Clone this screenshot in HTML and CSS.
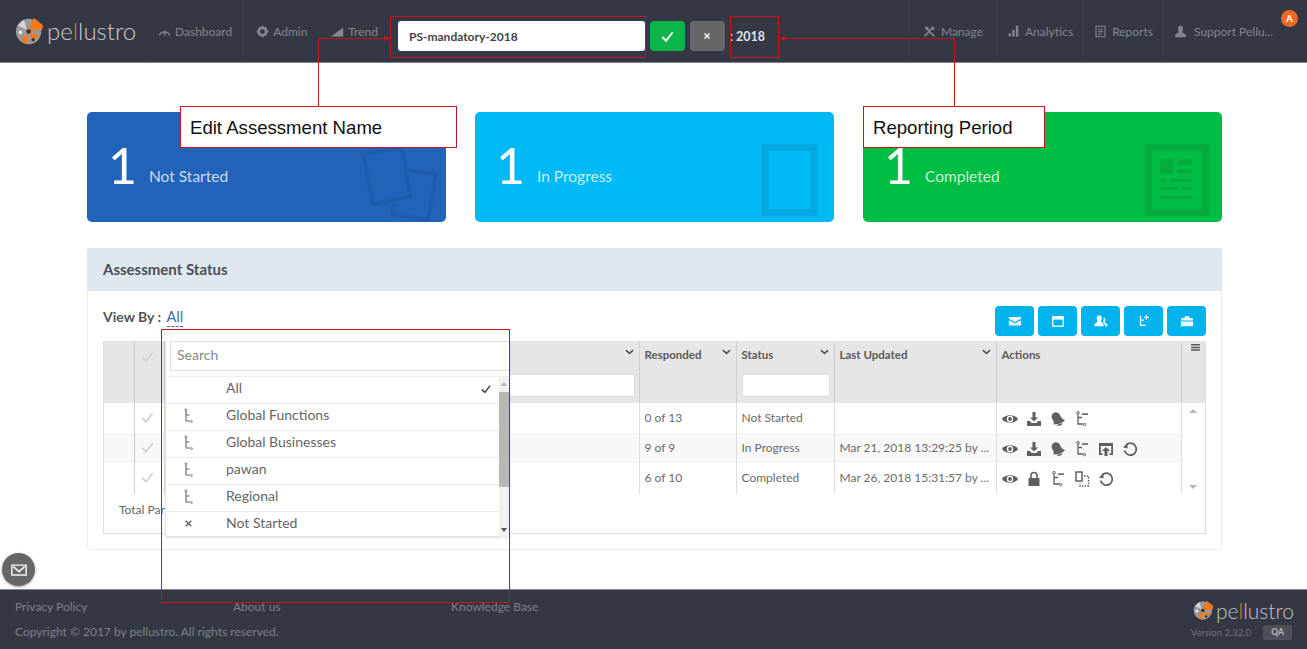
FILE: index.html
```html
<!DOCTYPE html>
<html lang="en">
<head>
<meta charset="utf-8">
<title>Pellustro</title>
<link rel="stylesheet" href="styles.css">
</head>
<body>
<svg class="sprite" width="0" height="0" aria-hidden="true">
  <defs>
    <symbol id="i-logo" viewBox="0 0 32 32">
      <circle cx="15" cy="16" r="14" fill="#9a9a9a"/>
      <path d="M14 15 L21 1 L31 9 L30 14Z" fill="#f47a20"/>
      <path d="M15 18 L26 19 L21 28Z" fill="#f47a20"/>
      <path d="M14 18 L6 26 L14 30Z" fill="#f47a20"/>
      <path d="M13 14 L3 9 L10 3Z" fill="#d5d5d5"/>
      <circle cx="15" cy="16" r="2.600" fill="#333"/>
      <circle cx="20" cy="25" r="1.800" fill="#333"/>
      <circle cx="6" cy="17" r="2" fill="#eee"/>
    </symbol>
    <symbol id="i-gauge" viewBox="0 0 16 16">
      <path d="M1.500 13 A7 7 0 0 1 14.500 13" fill="none" stroke="currentColor" stroke-width="1.600"/>
      <path d="M6.500 13 L10 5.500 L9 13Z" fill="currentColor"/>
    </symbol>
    <symbol id="i-gear" viewBox="0 0 16 16">
      <circle cx="8" cy="8" r="4.400" fill="none" stroke="currentColor" stroke-width="3"/>
      <path d="M6.500 .8h3v3h-3zM6.500 12.200h3v3h-3zM.8 6.500h3v3h-3zM12.200 6.500h3v3h-3z" fill="currentColor"/>
      <path d="M2.200 4.200l2-2 2 2-2 2zM9.800 4.200l2-2 2 2-2 2zM2.200 11.800l2-2 2 2-2 2zM9.800 11.800l2-2 2 2-2 2z" fill="currentColor"/>
    </symbol>
    <symbol id="i-trend" viewBox="0 0 16 16"><path d="M0 14 L15 3 V14Z" fill="currentColor"/></symbol>
    <symbol id="i-tools" viewBox="0 0 16 16">
      <path d="M2 14 L11 4M14 14 L5 5" fill="none" stroke="currentColor" stroke-width="2"/>
      <path d="M2 2.500 L6.500 2 L7 5 L4 6.500Z M10 3 L12.500 1 L12.500 3.500 L15 3.500 L13 6 L10.500 6Z" fill="currentColor"/>
    </symbol>
    <symbol id="i-bars" viewBox="0 0 16 16"><path d="M2 10h3v4H2zM6.500 6h3v8h-3zM11 1h3v13h-3z" fill="currentColor"/></symbol>
    <symbol id="i-report" viewBox="0 0 16 16">
      <path d="M2.500 1.500h11v13h-11z" fill="none" stroke="currentColor" stroke-width="1.300"/>
      <path d="M5 4.500h6v1.300H5zM5 7.500h6v1.300H5zM5 10.500h4v1.300H5z" fill="currentColor"/>
    </symbol>
    <symbol id="i-user" viewBox="0 0 16 16">
      <path d="M8 1c2 0 3 1.500 3 3.500S10 8 10 9c0 1 4 1.500 4.500 3.500V15h-13v-2.500C2 10.500 6 10 6 9S5 6.500 5 4.500 6 1 8 1z" fill="currentColor"/>
    </symbol>
    <symbol id="i-check" viewBox="0 0 16 16"><path d="M2.500 8.500 L6.500 12.500 L13.500 3.500" fill="none" stroke="currentColor" stroke-width="2"/></symbol>
    <symbol id="i-x" viewBox="0 0 16 16"><path d="M4 4 L12 12 M12 4 L4 12" fill="none" stroke="currentColor" stroke-width="2.200"/></symbol>
    <symbol id="i-chev" viewBox="0 0 10 6"><path d="M1 1 L5 4.500 L9 1" fill="none" stroke="currentColor" stroke-width="1.800"/></symbol>
    <symbol id="i-menu" viewBox="0 0 10 8"><path d="M0 0h10v1.800H0zM0 3h10v1.800H0zM0 6h10v1.800H0z" fill="currentColor"/></symbol>
    <symbol id="i-tree" viewBox="0 0 16 16">
      <circle cx="6" cy="1.800" r="1" fill="none" stroke="currentColor" stroke-width=".8"/>
      <path d="M6 2.800 V13 H10 M6 7 H9.500" fill="none" stroke="currentColor" stroke-width="1.100"/>
      <circle cx="11.500" cy="13.500" r=".9" fill="none" stroke="currentColor" stroke-width=".8"/>
    </symbol>
    <symbol id="i-tree-dash" viewBox="0 0 16 16">
      <circle cx="4" cy="1.800" r="1.300" fill="none" stroke="currentColor"/>
      <path d="M4 3.200 V13 H9 M4 6.500 H8" fill="none" stroke="currentColor" stroke-width="1.300"/>
      <path d="M8 2.300h6v1.600H8z" fill="currentColor"/>
      <circle cx="10.500" cy="13.500" r="1.200" fill="none" stroke="currentColor"/>
    </symbol>
    <symbol id="i-tree-plus" viewBox="0 0 16 16">
      <path d="M4 2 V13 H10 M4 7 H8" fill="none" stroke="currentColor" stroke-width="1.500"/>
      <path d="M10 1h1.500v2H13.500v1.500H11.500v2H10v-2H8V3h2z" fill="currentColor"/>
    </symbol>
    <symbol id="i-eye" viewBox="0 0 16 16">
      <path d="M0 8 C3 3 13 3 16 8 C13 13 3 13 0 8Z" fill="currentColor"/>
      <circle cx="8" cy="8" r="3.200" fill="#fff"/><circle cx="8" cy="8" r="1.900" fill="currentColor"/>
    </symbol>
    <symbol id="i-dl" viewBox="0 0 16 16">
      <path d="M6.500 1h3v5.500H12L8 10.500 4 6.500h2.500z" fill="currentColor"/>
      <path d="M1 10h3l1.500 2h5L12 10h3v5H1z" fill="currentColor"/>
    </symbol>
    <symbol id="i-bell" viewBox="0 0 16 16">
      <path d="M3 2.500 C5 .5 8.500 1 10 4 C11 6.500 12.500 8 15 9.500 C12 12 8 13.500 3.500 13.500 C4.500 10 2.500 9 1.800 7 C1.300 5.500 1.800 3.500 3 2.500Z" fill="currentColor"/>
      <path d="M6.500 14 L12.500 12 C12 14.500 8.500 15.800 6.500 14Z" fill="currentColor"/>
    </symbol>
    <symbol id="i-upload" viewBox="0 0 16 16">
      <path d="M1 2h14v12h-3.500v-1.800h1.700V5H2.800v7.200h1.700V14H1z" fill="currentColor"/>
      <path d="M8 6 L12 10H9.500v5h-3v-5H4z" fill="currentColor"/>
    </symbol>
    <symbol id="i-undo" viewBox="0 0 16 16">
      <path d="M4 4 A6 6 0 1 1 2.500 9.500" fill="none" stroke="currentColor" stroke-width="1.700"/>
      <path d="M1 6.500 L5.500 7.500 L5.500 2Z" fill="currentColor"/>
    </symbol>
    <symbol id="i-lock" viewBox="0 0 16 16">
      <path d="M5 7V4.500a3 3 0 0 1 6 0V7" fill="none" stroke="currentColor" stroke-width="1.600"/>
      <path d="M2.500 7h11v8h-11z" fill="currentColor"/>
    </symbol>
    <symbol id="i-copy" viewBox="0 0 16 16">
      <path d="M2 1h6v9H2z" fill="none" stroke="currentColor" stroke-width="1.500"/>
      <path d="M10 5h4.500v10H6v-3" fill="none" stroke="currentColor" stroke-width="1.400" stroke-dasharray="1.600 1.200"/>
    </symbol>
    <symbol id="i-mail" viewBox="0 0 16 16">
      <path d="M1 3.500h14v2L8 9 1 5.500z M1 7 L8 10.500 15 7 V13H1z" fill="currentColor"/>
    </symbol>
    <symbol id="i-cal" viewBox="0 0 16 16">
      <path d="M2 3h12v11H2z" fill="none" stroke="currentColor" stroke-width="1.600"/>
      <path d="M2 3h12v3.500H2z" fill="currentColor"/>
    </symbol>
    <symbol id="i-users" viewBox="0 0 16 16">
      <path d="M6 1.500c2 0 3 1.500 3 3.200S8 8 8 8.500c0 1 3 1.500 3 4V14H.5v-1.500c0-2.500 3.500-3 3.500-4C4 8 3 6.500 3 4.700S4 1.500 6 1.500z" fill="currentColor"/>
      <path d="M11 4c1.500 0 2 1 2 2.500s-.7 2.300-.7 3c0 .7 3.200 1 3.200 3V14h-3c0-2.500-1-3.500-2.500-4.500.7-1 1-2 1-3.500z" fill="currentColor"/>
    </symbol>
    <symbol id="i-case" viewBox="0 0 16 16">
      <path d="M5 4.500c0-3 6-3 6 0h3.500L15 7.500H1l.5-3z M1 8.500h14V14H1z" fill="currentColor"/>
    </symbol>
    <symbol id="i-envelope" viewBox="0 0 16 16">
      <path d="M1 3h14v10H1z M2.300 4.300v7.400h11.400V4.300z" fill="currentColor" fill-rule="evenodd"/>
      <path d="M3 5 L8 9.500 L13 5" fill="none" stroke="currentColor" stroke-width="1.400"/>
    </symbol>
  </defs>
</svg>

<header class="topbar">
  <a class="brand">
    <svg class="brand-mark"><use href="#i-logo"/></svg>
    <span class="brand-text">pe<span class="brand-bar">l</span>lustro</span>
  </a>
  <nav class="nav">
    <a class="nav-item"><svg class="nav-icon"><use href="#i-gauge"/></svg>Dashboard</a>
    <a class="nav-item"><svg class="nav-icon"><use href="#i-gear"/></svg>Admin</a>
    <a class="nav-item"><svg class="nav-icon"><use href="#i-trend"/></svg>Trend</a>
  </nav>
  <div class="edit-name">
    <input class="name-input" type="text" value="PS-mandatory-2018">
    <button class="square-btn ok"><svg class="btn-icon"><use href="#i-check"/></svg></button>
    <button class="square-btn cancel"><svg class="btn-icon small"><use href="#i-x"/></svg></button>
    <span class="period">:<b class="period-year">2018</b></span>
  </div>
  <nav class="nav nav-right">
    <a class="nav-item"><svg class="nav-icon"><use href="#i-tools"/></svg>Manage</a>
    <a class="nav-item"><svg class="nav-icon"><use href="#i-bars"/></svg>Analytics</a>
    <a class="nav-item"><svg class="nav-icon"><use href="#i-report"/></svg>Reports</a>
    <a class="nav-item user"><svg class="nav-icon"><use href="#i-user"/></svg>Support Pellu...<span class="badge">A</span></a>
  </nav>
</header>

<main class="main">
  <section class="cards">
    <article class="card blue">
      <span class="card-num">1</span><span class="card-label">Not Started</span>
      <svg class="card-art art-pages" viewBox="0 0 80 76">
        <path d="M3 8 L42 2 L50 50 L13 58Z" fill="none" stroke="currentColor" stroke-width="4"/>
        <path d="M48 24 L76 28 L68 74 L32 68 L34 58" fill="none" stroke="currentColor" stroke-width="4"/>
      </svg>
    </article>
    <article class="card cyan">
      <span class="card-num">1</span><span class="card-label">In Progress</span>
      <svg class="card-art art-book" viewBox="0 0 56 72">
        <path d="M3.500 3.500h49v65h-49z" fill="none" stroke="currentColor" stroke-width="7"/>
      </svg>
    </article>
    <article class="card green">
      <span class="card-num">1</span><span class="card-label">Completed</span>
      <svg class="card-art art-news" viewBox="0 0 64 72">
        <path d="M3.500 3.500h57v65h-57z" fill="none" stroke="currentColor" stroke-width="7"/>
        <path d="M15 15h13v15H15zM32 15h15v6H32zM32 25h15v4H32zM15 35h6v3h-6zM25 35h22v3H25zM15 43h18v3H15zM37 43h10v3H37zM15 52h32v3H15z" fill="currentColor"/>
      </svg>
    </article>
  </section>

  <section class="panel">
    <h2 class="panel-title">Assessment Status</h2>
    <div class="panel-body">
      <div class="toolbar">
        <div class="view-by">View By : <a class="view-link">All</a></div>
        <div class="tool-btns">
          <button class="tool-btn"><svg><use href="#i-mail"/></svg></button>
          <button class="tool-btn"><svg><use href="#i-cal"/></svg></button>
          <button class="tool-btn"><svg><use href="#i-users"/></svg></button>
          <button class="tool-btn"><svg><use href="#i-tree-plus"/></svg></button>
          <button class="tool-btn"><svg><use href="#i-case"/></svg></button>
        </div>
      </div>

      <div class="table-wrap">
        <table class="grid">
          <colgroup>
            <col class="c-blank"><col class="c-check"><col class="c-name"><col class="c-resp">
            <col class="c-status"><col class="c-updated"><col class="c-actions"><col class="c-menu">
          </colgroup>
          <thead>
            <tr>
              <th></th>
              <th class="center"><svg class="tick"><use href="#i-check"/></svg></th>
              <th><span class="th-row"><span>Assessment</span><svg class="chev"><use href="#i-chev"/></svg></span><input class="filter" type="text"></th>
              <th><span class="th-row"><span>Responded</span><svg class="chev"><use href="#i-chev"/></svg></span></th>
              <th><span class="th-row"><span>Status</span><svg class="chev"><use href="#i-chev"/></svg></span><input class="filter" type="text"></th>
              <th><span class="th-row"><span>Last Updated</span><svg class="chev"><use href="#i-chev"/></svg></span></th>
              <th><span class="th-row"><span>Actions</span></span></th>
              <th class="menu-cell"><svg class="menu-icon"><use href="#i-menu"/></svg></th>
            </tr>
          </thead>
          <tbody>
            <tr>
              <td></td><td class="center"><svg class="tick"><use href="#i-check"/></svg></td><td></td>
              <td>0 of 13</td><td>Not Started</td><td></td>
              <td class="acts">
                <svg><use href="#i-eye"/></svg><svg><use href="#i-dl"/></svg><svg><use href="#i-bell"/></svg><svg><use href="#i-tree-dash"/></svg>
              </td>
              <td class="scroll-cell" rowspan="3"><span class="tri up"></span><span class="tri down"></span></td>
            </tr>
            <tr class="stripe">
              <td></td><td class="center"><svg class="tick"><use href="#i-check"/></svg></td><td></td>
              <td>9 of 9</td><td>In Progress</td><td>Mar 21, 2018 13:29:25 by ...</td>
              <td class="acts">
                <svg><use href="#i-eye"/></svg><svg><use href="#i-dl"/></svg><svg><use href="#i-bell"/></svg><svg><use href="#i-tree-dash"/></svg><svg><use href="#i-upload"/></svg><svg><use href="#i-undo"/></svg>
              </td>
            </tr>
            <tr class="last">
              <td></td><td class="center"><svg class="tick"><use href="#i-check"/></svg></td><td></td>
              <td>6 of 10</td><td>Completed</td><td>Mar 26, 2018 15:31:57 by ...</td>
              <td class="acts">
                <svg><use href="#i-eye"/></svg><svg><use href="#i-lock"/></svg><svg><use href="#i-tree-dash"/></svg><svg><use href="#i-copy"/></svg><svg><use href="#i-undo"/></svg>
              </td>
            </tr>
          </tbody>
        </table>
        <div class="table-foot">Total Participants</div>

        <div class="dropdown">
          <input class="dd-search" type="text" placeholder="Search">
          <div class="dd-listwrap">
            <ul class="dd-list">
              <li class="dd-item"><span class="dd-ic"></span><span class="dd-text">All</span><svg class="dd-tick"><use href="#i-check"/></svg></li>
              <li class="dd-item"><svg class="dd-ic"><use href="#i-tree"/></svg><span class="dd-text">Global Functions</span></li>
              <li class="dd-item"><svg class="dd-ic"><use href="#i-tree"/></svg><span class="dd-text">Global Businesses</span></li>
              <li class="dd-item"><svg class="dd-ic"><use href="#i-tree"/></svg><span class="dd-text">pawan</span></li>
              <li class="dd-item"><svg class="dd-ic"><use href="#i-tree"/></svg><span class="dd-text">Regional</span></li>
              <li class="dd-item"><svg class="dd-ic x"><use href="#i-x"/></svg><span class="dd-text">Not Started</span></li>
            </ul>
            <div class="dd-scroll"><span class="tri up"></span><span class="dd-thumb"></span><span class="tri down dark"></span></div>
          </div>
        </div>
      </div>
    </div>
  </section>
</main>

<button class="mail-fab"><svg><use href="#i-envelope"/></svg></button>

<footer class="footer">
  <div class="foot-left">
    <div class="foot-links"><a>Privacy Policy</a><a>About us</a><a>Knowledge Base</a></div>
    <div class="copyright">Copyright © 2017 by pellustro. All rights reserved.</div>
  </div>
  <div class="foot-right">
    <div class="foot-brand">
      <svg class="foot-mark"><use href="#i-logo"/></svg>
      <span class="foot-text">pe<span class="brand-bar">l</span>lustro</span>
    </div>
    <div class="foot-version"><span>Version 2.32.0</span><span class="qa">QA</span></div>
  </div>
</footer>

<div class="notes">
  <svg class="note-lines" viewBox="0 0 1307 649" width="1307" height="649">
    <path d="M318.500 106 V38.500 H386" fill="none" stroke="#c8141f"/>
    <path d="M390 38.500 L384 36 V41Z" fill="#d3141e"/>
    <path d="M954.500 106 V38.500 H783" fill="none" stroke="#c8141f"/>
    <path d="M779 38.500 L785 36 V41Z" fill="#d3141e"/>
  </svg>
  <div class="note-box nb-input"></div>
  <div class="note-box nb-year"></div>
  <div class="note-box nb-drop"></div>
  <div class="note-label nl-name">Edit Assessment Name</div>
  <div class="note-label nl-period">Reporting Period</div>
</div>
</body>
</html>
```

FILE: styles.css
```css
* { box-sizing: border-box; }
html, body { margin: 0; height: 100%; }
body {
  display: flex;
  flex-direction: column;
  height: 649px;
  overflow: hidden;
  position: relative;
  background: #fff;
  font-family: Lato, "Open Sans", sans-serif;
  color: #666;
}
.sprite { position: absolute; }
button { font: inherit; border: 0; padding: 0; }

/* Top bar */
.topbar {
  flex: none;
  display: flex;
  align-items: center;
  height: 63px;
  background: #343844;
  border-bottom: 1px solid #80848c;
  color: #83868f;
}
.brand { display: flex; align-items: center; width: 145px; padding-left: 15px; flex: none; }
.brand-mark { width: 29px; height: 29px; flex: none; }
.brand-text {
  margin-left: 3px;
  font-size: 24px;
  font-weight: 300;
  color: #c9cbd0;
  line-height: 30px;
}
.brand-bar { color: #d9792e; }
.nav { display: flex; align-self: stretch; }
.nav-right { margin-left: auto; }
.nav-item {
  display: flex;
  align-items: center;
  gap: 4px;
  padding: 0 11px 0 12px;
  font-size: 12px;
  white-space: nowrap;
  border-left: 1px solid #3a3e4a;
  position: relative;
}
.nav-icon { width: 13px; height: 13px; flex: none; }
.nav-right .nav-item { gap: 5px; padding: 0 10px 0 10px; }
.nav-right .nav-item:first-child { padding: 0 13px 0 14px; }
.nav-right .nav-item.user { width: 144px; padding-left: 10px; gap: 7px; }
.badge {
  position: absolute;
  top: 10px;
  right: 9px;
  width: 17px;
  height: 17px;
  border-radius: 50%;
  background: #f26a21;
  color: #fff;
  font-size: 10px;
  font-weight: 700;
  text-align: center;
  line-height: 17px;
}
.edit-name { display: flex; align-items: center; margin-left: 9px; margin-top: 10px; }
.name-input {
  width: 247px;
  height: 30px;
  border: 0;
  border-radius: 3px;
  padding: 0 11px;
  background: #fff;
  font: 700 12px Lato, sans-serif;
  color: #444;
}
.square-btn {
  width: 35px;
  height: 30px;
  margin-left: 5px;
  border-radius: 4px;
  color: #fff;
  display: flex;
  align-items: center;
  justify-content: center;
}
.square-btn.ok { background: #0cb54a; }
.square-btn.cancel { background: #666; }
.btn-icon { width: 15px; height: 15px; }
.btn-icon.small { width: 10px; height: 10px; }
.period { margin-left: 5px; font-size: 12.500px; color: #dfe2e8; }
.period-year { margin-left: 3px; }

/* Main */
.main { flex: 1; padding: 49px 85px 0 87px; min-height: 0; }
.cards { display: grid; grid-template-columns: repeat(3, 359px); gap: 29px; }
.card {
  height: 110px;
  border-radius: 5px;
  position: relative;
  padding: 27px 0 0 21px;
  display: flex;
  align-items: flex-start;
}
.card.blue { background: #2163b8; color: #1e5cad; }
.card.cyan { background: #00b9f5; color: #03a8e0; }
.card.green { background: #00bd43; color: #04ac3e; }
.card-num {
  font-size: 50px;
  font-weight: 400;
  line-height: 52px;
  color: #fff;
  width: 41px;
  flex: none;
}
.card-label {
  margin-top: 27px;
  font-size: 15.500px;
  line-height: 20px;
  color: rgba(255, 255, 255, .78);
}
.card-art { position: absolute; }
.art-pages { right: 6px; top: 34px; width: 80px; height: 76px; }
.art-book { right: 16px; top: 32px; width: 57px; height: 72px; }
.art-news { right: 13px; top: 32px; width: 64px; height: 72px; }

/* Panel */
.panel {
  margin-top: 26px;
  border: 1px solid #eceef0;
  border-top: 0;
  border-radius: 3px;
  height: 302px;
}
.panel-title {
  margin: 0 -1px;
  height: 43px;
  padding: 0 16px;
  background: #dfe7ef;
  border-radius: 3px 3px 0 0;
  font-size: 15px;
  font-weight: 700;
  line-height: 43px;
  color: #4b4f55;
}
.panel-body { padding: 15px 15px 0; }
.toolbar { display: flex; justify-content: space-between; align-items: flex-start; height: 35px; }
.view-by { margin-top: 2px; font-size: 14px; font-weight: 700; color: #555; line-height: 18px; }
.view-link { margin-left: 2px; font-size: 14.500px; font-weight: 400; color: #3a6fb0; border-bottom: 1px dashed #3a6fb0; padding-bottom: 1px; }
.tool-btns { display: flex; gap: 4px; }
.tool-btn {
  width: 39px;
  height: 30px;
  border-radius: 4px;
  background: #00b3ed;
  color: #eaf9ff;
  display: flex;
  align-items: center;
  justify-content: center;
}
.tool-btn svg { width: 14px; height: 14px; }

/* Table */
.table-wrap { position: relative; height: 193px; border: 1px solid #ddd; border-top: 0; }
.grid { width: 100%; border-collapse: collapse; table-layout: fixed; font-size: 12px; }
.c-blank { width: 30px; }
.c-check { width: 30px; }
.c-name { width: 475px; }
.c-resp { width: 97px; }
.c-status { width: 98px; }
.c-updated { width: 162px; }
.c-actions { width: 185px; }
.grid th {
  height: 62px;
  background: #e6e6e6;
  border-right: 1px solid #cfcfcf;
  padding: 5px 4px 0 5px;
  vertical-align: top;
  text-align: left;
  font-size: 11.500px;
  font-weight: 700;
  color: #5a5a5a;
}
.grid th:last-child { border-right: 0; }
.grid td {
  height: 30px;
  padding: 0 4px 2px 5px;
  border-right: 1px solid #ddd;
  color: #6a6a6a;
  white-space: nowrap;
  overflow: hidden;
}
.grid .last td { height: 31px; padding-bottom: 3px; }
.grid td:first-child { border-right: 1px solid #ccc; }
.grid .center { padding: 0 3px 3px 0; text-align: center; }
.grid .last .center { padding-bottom: 4px; }
.grid th.center { padding: 7px 3px 0 0; }
.grid td.acts { padding: 2px 0 0 5px; }
.grid .last td.acts { padding: 1px 0 0 5px; }
.stripe td { background: #f8f8f8; }
.grid td.scroll-cell { border-right: 0; background: #fff; position: relative; padding: 0; }
.th-row { display: flex; justify-content: space-between; align-items: center; height: 16px; padding-right: 1px; }
.chev { width: 9px; height: 6px; color: #555; flex: none; margin-top: -4px; }
.filter {
  display: block;
  margin-top: 12px;
  width: 100%;
  height: 23px;
  border: 1px solid #dcdcdc;
  border-radius: 2px;
  background: #fff;
}
.tick { display: inline-block; width: 15px; height: 15px; color: #d4d4d4; vertical-align: middle; }
.grid th.menu-cell { padding: 3px 0 0 9px; }
.menu-icon { display: block; width: 9px; height: 7px; color: #555; }
.acts svg { width: 16px; height: 16px; margin-right: 8px; color: #5f5f5f; vertical-align: middle; }
.tri { position: absolute; left: 50%; margin-left: -4px; width: 0; height: 0; border-left: 4px solid transparent; border-right: 4px solid transparent; }
.tri.up { top: 6px; border-bottom: 4px solid #b5b5b5; }
.tri.down { bottom: 5px; border-top: 4px solid #b5b5b5; }
.tri.dark { border-top-color: #555; }
.table-foot { margin-top: 8px; padding-left: 15px; font-size: 12px; color: #666; line-height: 16px; }

/* Dropdown */
.dropdown {
  position: absolute;
  top: 0;
  left: 61px;
  width: 345px;
  height: 196px;
  background: #fff;
  border: 1px solid #e4e4e4;
  border-top: 0;
  border-right: 0;
  border-radius: 0 0 3px 3px;
  box-shadow: 0 1px 2px rgba(0, 0, 0, .12);
}
.dd-search {
  display: block;
  margin-left: 4px;
  width: 340px;
  height: 30px;
  border: 1px solid #e2dcdc;
  padding: 0 6px 3px;
  font: 14px Lato, sans-serif;
  color: #777;
}
.dd-search::placeholder { color: #8a8a8a; }
.dd-listwrap { position: relative; margin-top: 5px; }
.dd-list { list-style: none; margin: 0 10px 0 0; padding: 0; border-top: 1px solid #eee; }
.dd-item {
  display: flex;
  align-items: center;
  height: 27px;
  padding-bottom: 5px;
  border-bottom: 1px solid #e8e8e8;
  font-size: 14px;
  color: #666;
}
.dd-item:last-child { border-bottom: 0; height: 26px; padding-bottom: 6px; }
.dd-ic { width: 16px; height: 16px; margin-left: 14px; margin-top: 2px; color: #666; flex: none; }
.dd-ic.x { width: 11px; height: 11px; margin-left: 17px; margin-right: 2px; margin-top: 3px; }
.dd-text { margin-left: 30px; flex: 1; }
.dd-tick { width: 12px; height: 12px; margin-right: 8px; color: #444; margin-top: 3px; }
.dd-scroll { position: absolute; top: 0; right: 0; width: 11px; height: 161px; background: #f1f1f1; }
.dd-scroll .tri { margin-left: -3.500px; border-left-width: 3.500px; border-right-width: 3.500px; }
.dd-thumb { position: absolute; top: 16px; left: 0; right: 1px; height: 95px; background: #b9b7b5; }

/* Floating mail */
.mail-fab {
  position: absolute;
  left: 2px;
  top: 553px;
  width: 33px;
  height: 33px;
  border-radius: 50%;
  background: #666;
  color: #f4f4f4;
  box-shadow: 0 1px 3px rgba(0, 0, 0, .35);
  display: flex;
  align-items: center;
  justify-content: center;
}
.mail-fab svg { width: 18px; height: 18px; }

/* Footer */
.footer {
  flex: none;
  height: 60px;
  background: #343844;
  border-top: 1px solid #80848c;
  display: flex;
  justify-content: space-between;
  padding: 0 15px;
  color: #7d808a;
}
.foot-links { display: grid; grid-template-columns: 218px 218px auto; margin-top: 9px; font-size: 12px; line-height: 16px; }
.copyright { margin-top: 9px; font-size: 12px; line-height: 15px; }
.foot-right { display: flex; flex-direction: column; align-items: flex-end; }
.foot-brand { display: flex; align-items: center; margin-top: 10px; height: 21px; margin-right: -2px; }
.foot-mark { width: 21px; height: 21px; }
.foot-text { margin-left: 2px; font-size: 21px; font-weight: 300; color: #c0c2c8; line-height: 21px; }
.foot-version { display: flex; align-items: center; gap: 12px; margin-top: 4px; font-size: 9.500px; color: #6f727c; }
.qa { width: 29px; height: 15px; border-radius: 2px; background: #4c505b; color: #b9bbc0; text-align: center; line-height: 15px; font-size: 8.500px; font-weight: 700; }

/* Annotations laid over the screenshot */
.notes { position: absolute; inset: 0; pointer-events: none; }
.note-lines { position: absolute; left: 0; top: 0; }
.note-box { position: absolute; border: 1px solid #c8141f; }
.nb-input { left: 390px; top: 16px; width: 256px; height: 42px; }
.nb-year { left: 730px; top: 16px; width: 49px; height: 42px; }
.nb-drop { left: 161px; top: 329px; width: 349px; height: 274px; }
.note-label {
  position: absolute;
  top: 106px;
  height: 42px;
  background: #fff;
  border: 1px solid #c8141f;
  padding-left: 9px;
  font: 18.600px/42px "Liberation Sans", Arial, sans-serif;
  color: #111;
}
.nl-name { left: 180px; width: 277px; }
.nl-period { left: 863px; width: 182px; }
```
